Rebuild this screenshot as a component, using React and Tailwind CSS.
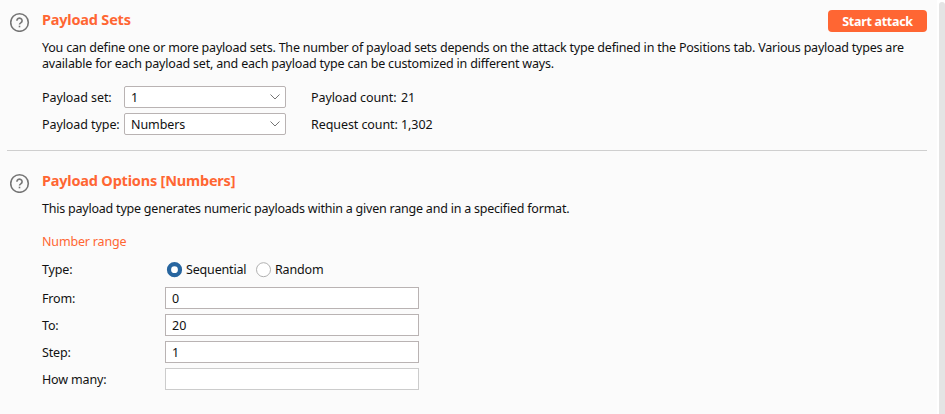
const rowText = "h-[18px] leading-[18px] whitespace-nowrap";
function Help() {
  return (
    <svg width="20" height="20" viewBox="0 0 20 20" fill="none" stroke="#757575" strokeWidth="1.6">
      <circle cx="9.5" cy="10.5" r="8.8" />
      <path d="M6.9 8.7a2.6 2.5 0 1 1 4.1 2c-.9.6-1.5.9-1.5 1.9" />
      <path d="M9.5 13.7v1.6" />
    </svg>
  );
}
function Select({ value }) {
  return (
    <div className="w-[162px] h-[22px] rounded-[2px] border border-[#b9b3b3] bg-white flex items-center justify-between pl-[6px] pr-[5px]">
      <span className="pt-[2px]">{value}</span>
      <svg width="10" height="6" viewBox="0 0 10 6" fill="none" stroke="#757575"><path d="M.5.5 5 5 9.5.5" /></svg>
    </div>
  );
}
function Field({ label, value, disabled }) {
  return (
    <div className="flex h-[27px]">
      <span className="w-[123px] pt-[3px] h-[21px] leading-[18px] whitespace-nowrap tracking-[-0.15px]">{label}</span>
      <div className={"w-[254px] h-[22px] border pl-[6px] leading-[22px] bg-white " + (disabled ? "border-[#cccccc]" : "border-[#b9b3b3]")}>{value}</div>
    </div>
  );
}
export default function App() {
  return (
    <div className="w-[945px] h-[414px] overflow-hidden bg-[#fbfbfb] text-[#111111] flex text-[12.5px] font-['Noto_Sans',sans-serif]">
      <main className="w-[927px] pl-[7px]">
        <section className="flex h-[151px] border-b border-[#cfcfcf]">
          <div className="w-[35px] shrink-0 pt-[12px] pl-[3px]"><Help /></div>
          <div className="flex-1 min-w-0">
            <div className="flex justify-between pt-[10px] h-[40px]">
              <h2 className="-mt-px text-[14.5px] leading-[20px] font-bold tracking-[-0.2px] text-[#ff6633]">Payload Sets</h2>
              <button className="w-[99px] h-[22px] pt-px rounded-[4px] bg-[#ff6633] text-white font-bold tracking-[-0.3px] leading-[22px]">Start attack</button>
            </div>
            <p className="leading-[16px] whitespace-nowrap tracking-[-0.21px]">You can define one or more payload sets. The number of payload sets depends on the attack type defined in the Positions tab. Various payload types are<br /><span className="tracking-[-0.19px]">available for each payload set, and each payload type can be customized in different ways.</span></p>
            <div className="mt-[14px] grid grid-cols-[82px_187px_90px_auto] auto-rows-[22px] gap-y-[5px] items-center justify-start tracking-[-0.08px]">
              <span className="pt-[2px]">Payload set:</span><Select value="1" /><span className="pt-[2px]">Payload count:</span><span className="pt-[2px]">21</span>
              <span className="pt-[2px]">Payload type:</span><Select value="Numbers" /><span className="pt-[2px]">Request count:</span><span className="pt-[2px]">1,302</span>
            </div>
          </div>
        </section>
        <section className="flex">
          <div className="w-[35px] shrink-0 pt-[22px] pl-[3px]"><Help /></div>
          <div>
            <h2 className="mt-[19px] text-[14.5px] leading-[20px] font-bold tracking-[-0.2px] text-[#ff6633]">Payload Options [Numbers]</h2>
            <p className={"mt-[10px] tracking-[-0.22px] " + rowText}>This payload type generates numeric payloads within a given range and in a specified format.</p>
            <h3 className={"mt-[15px] tracking-[-0.17px] text-[#ff6633] " + rowText}>Number range</h3>
            <div className={"mt-[10px] flex items-center tracking-[-0.17px] " + rowText}>
              <span className="w-[124px]">Type:</span>
              <svg width="17" height="16"><circle cx="8.5" cy="7.7" r="5.5" fill="white" stroke="#27659f" strokeWidth="4.2" /></svg>
              <span className="ml-[3px] w-[69px]">Sequential</span>
              <svg width="17" height="16"><circle cx="8.5" cy="7.7" r="7" fill="white" stroke="#b0b0b0" /></svg>
              <span className="ml-[3px]">Random</span>
            </div>
            <div className="mt-[8px]">
              <Field label="From:" value="0" /><Field label="To:" value="20" /><Field label="Step:" value="1" /><Field label="How many:" disabled />
            </div>
          </div>
        </section>
      </main>
      <div className="ml-auto w-[8px] bg-white pl-[2px] pt-[2px]">
        <div className="h-full rounded-t-[3px] bg-[#e4e4e4]" />
      </div>
    </div>
  );
}
